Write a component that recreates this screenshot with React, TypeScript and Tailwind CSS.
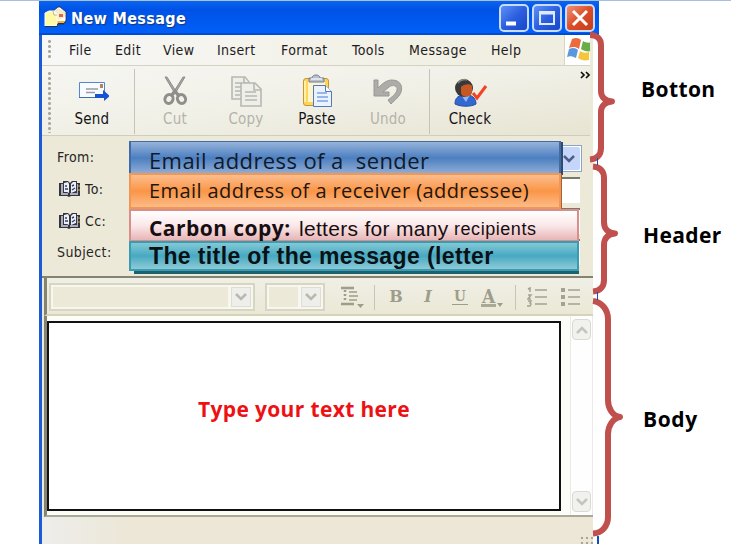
import React from "react";

const menuItems = [
  { label: "File", cell: "w-[46px]" },
  { label: "Edit", cell: "w-[48px]" },
  { label: "View", cell: "w-[54px]" },
  { label: "Insert", cell: "w-[64px]" },
  { label: "Format", cell: "w-[71px]" },
  { label: "Tools", cell: "w-[57px]" },
  { label: "Message", cell: "w-[82px]" },
  { label: "Help", cell: "w-[50px]" },
];

function Grip({ className }: { className: string }) {
  return (
    <div
      className={`w-[3px] shrink-0 bg-[radial-gradient(circle_at_1.5px_1.5px,#aaa89c_1.3px,transparent_1.6px)] bg-[length:3px_5px] ${className}`}
    />
  );
}

function MailIcon() {
  return (
    <svg width="23" height="22" viewBox="0 0 23 22" className="shrink-0">
      <path d="M8 6 14 1h2l6 5v9l-2 3H9z" fill="#fff" stroke="#243050" strokeWidth=".8" />
      <path d="m10 6 4-4 7 4v5l-7 3z" fill="#f2eccb" />
      <path d="M15 8h4v3h-4z" fill="#dc6a46" />
      <path d="M13 15h8l-2 3h-6z" fill="#f4b22c" />
      <path d="M1 7 5 5h5l3 3v12H1z" fill="#fff9a8" stroke="#fffef0" />
      <path d="m9 5 1 4h3" fill="#fff" stroke="#8c8c68" strokeWidth=".6" />
      <path d="M1 20.500h12l1-3h6l2-3" stroke="#26314e" fill="none" />
    </svg>
  );
}

function SendIcon() {
  return (
    <svg width="34" height="34" viewBox="0 0 34 34">
      <path d="M4.500 9.500h25v15h-25z" fill="#f8fbff" stroke="#5585cd" />
      <path d="M4 24.500h22" stroke="#416dac" />
      <path d="M11 16h12M11 19.500h9" stroke="#9b9ba4" strokeWidth="1.500" />
      <path d="M25 11h3v4h-3z" fill="#b6825c" />
      <path d="M20 21h8v-4l7 6-6 5v-3h-9z" fill="#1755ce" />
    </svg>
  );
}

function CutIcon() {
  return (
    <svg width="34" height="34" viewBox="0 0 34 34" fill="none" stroke="#8e8e8a">
      <path d="m7 4 9 15 3 1L9 4zM27 4l-9 15-3 1L25 4z" fill="#a6a6a2" strokeWidth="1" />
      <path d="m18 17-5 6m3-6 5 6" strokeWidth="3.500" />
      <ellipse cx="11" cy="26" rx="4" ry="4.500" strokeWidth="3" transform="rotate(25 11 26)" />
      <ellipse cx="23.500" cy="26" rx="4" ry="4.500" strokeWidth="3" transform="rotate(-25 23.500 26)" />
    </svg>
  );
}

function CopyIcon() {
  return (
    <svg width="34" height="34" viewBox="0 0 34 34" fill="#efefea" stroke="#b8b8b2" strokeWidth="1.600">
      <path d="M3 4h13l4 5v17H3z" />
      <path d="M15 4v6h5M6 10h6M6 14h6M6 18h6M6 22h5" />
      <path d="M12 10h14l6 6v17H12z" />
      <path d="M25 10v7h7M16 19h11M16 23h12M16 27h12" fill="none" />
    </svg>
  );
}

function PasteIcon() {
  return (
    <svg width="34" height="34" viewBox="0 0 34 34">
      <rect x="3.500" y="5.500" width="25" height="27" rx="2.500" fill="#ffd45c" stroke="#c7962f" />
      <path d="M8 9h17v20H8z" fill="#fff5cc" />
      <path d="M5 8v21" stroke="#fff2a3" strokeWidth="2" />
      <path d="M9 9V5h3c0-4 8-4 8 0h4v4z" fill="#b9bfcd" stroke="#747d91" />
      <path d="M11 6h11" stroke="#eef1f6" strokeWidth="1.500" />
      <path d="M13.500 12.500h12l6 6v15h-18z" fill="#eaf3ff" stroke="#5479bb" />
      <path d="M25.500 12.500v6h6" fill="#fff" stroke="#5479bb" />
      <path d="M17 20h10M17 24h11M17 28h11" stroke="#79a4e9" strokeWidth="1.500" />
    </svg>
  );
}

function UndoIcon() {
  return (
    <svg width="34" height="34" viewBox="0 0 34 34">
      <path
        d="M3 7h4v8c5-5 9-8 14-8 8 0 11 6 9 12-1 4-6 8-10 12l-3-4c4-3 8-6 9-10 1-4-4-6-8-3l-6 5h6v4H3z"
        fill="#acaca8"
        stroke="#999994"
      />
    </svg>
  );
}

function CheckIcon() {
  return (
    <svg width="36" height="34" viewBox="0 0 36 34">
      <path d="M3 31c0-6 3-8 7-9h7c4 1 7 4 7 9-5 3-15 3-21 0z" fill="#3468d1" stroke="#23509e" />
      <path d="m9 22 5 7 4-7z" fill="#8db9ff" />
      <circle cx="12" cy="15" r="9" fill="#393939" />
      <path d="M6 10c2-3 6-4 9-3" stroke="#888" strokeWidth="1.500" fill="none" />
      <path d="M9 14c2-3 10-4 11-1v7c-2 5-10 5-11 0z" fill="#c65826" />
      <path d="m21 20 4 5L34 13" fill="none" stroke="#f24326" strokeWidth="3" />
    </svg>
  );
}

function ToolButton({
  label,
  disabled,
  className,
  children,
}: {
  label: string;
  disabled?: boolean;
  className: string;
  children: React.ReactNode;
}) {
  return (
    <div className={`flex shrink-0 flex-col items-center pt-[7px] ${className}`}>
      {children}
      <span
        className={`mt-[2px] whitespace-nowrap text-[15px] leading-[20px] tracking-[0.2px] ${disabled ? "text-[#b4b3a9]" : "text-[#151515]"}`}
      >
        {label}
      </span>
    </div>
  );
}

function WindowButton({ kind }: { kind: "min" | "max" | "close" }) {
  return (
    <div
      className={`flex h-[28px] w-[30px] items-center justify-center rounded-[5px] border-2 border-[#c7dcff] ${
        kind === "close"
          ? "bg-linear-to-br from-[#ee9170] via-[#da4c27] to-[#c5401b]"
          : "bg-linear-to-br from-[#5f90f5] via-[#2c5fdf] to-[#1946ca]"
      }`}
    >
      <svg width="20" height="20" viewBox="0 0 20 20" fill="none" stroke="#fff">
        {kind === "min" && <path d="M2 15.500h10" strokeWidth="4" />}
        {kind === "max" && <path d="M3 4h14v12H3zM3 5.500h14" strokeWidth="2" stroke="#dceaff" />}
        {kind === "close" && <path d="m3 3 14 14M17 3 3 17" strokeWidth="3" />}
      </svg>
    </div>
  );
}

function BookIcon() {
  return (
    <svg width="23" height="18" viewBox="0 0 23 18">
      <path d="M1 3h4V1h5l2 2 2-2h5v2h3v13h-9l-2 1-2-1H1z" fill="#35353b" />
      <path d="M3 4h2v9h5v2H3zM12 15v-2h7V4h1v11z" fill="#a9adbe" />
      <path d="m6 3 4-1 1 2v9l-2-1H6zM13 4l2-2h3v9l-5 2z" fill="#e9effc" />
      <path d="M7 6h2M7 9h3m4-3 2-1m-2 5 3-2" stroke="#39415b" strokeWidth="1.500" />
      <path d="M21 5v2m0 2v2" stroke="#d69c42" />
    </svg>
  );
}

function Chevron({ up, className }: { up?: boolean; className: string }) {
  return (
    <svg width="12" height="10" viewBox="0 0 12 10" fill="none" stroke="currentColor" strokeWidth="2.500" className={className}>
      <path d={up ? "m1 8 5-5 5 5" : "m1 2 5 5 5-5"} />
    </svg>
  );
}

function FormatSelect({ className }: { className: string }) {
  return (
    <div className={`flex h-[28px] shrink-0 border-2 border-[#d7d6c2] bg-[#f8f7ef] p-[2px] ${className}`}>
      <div className="mr-[3px] flex-1 bg-[#ece9d8]" />
      <div className="flex w-[20px] items-center justify-center border border-[#dddcd5] bg-[#eeeeea]">
        <Chevron className="text-[#bab9b0]" />
      </div>
    </div>
  );
}

function ParagraphIcon() {
  return (
    <svg width="24" height="24" viewBox="0 0 24 24" stroke="#9e9d8b" fill="none">
      <path d="M0 2h13M0 18h13" strokeWidth="2.500" />
      <path d="M8 6h8M8 10h9M8 14h8" strokeWidth="1.500" />
      <path d="M4 4v12" strokeWidth="2.500" strokeDasharray="2 2" />
      <path d="M16 18h7l-3.500 4z" fill="#9e9d8b" stroke="none" />
    </svg>
  );
}

function ListIcon({ numbered }: { numbered?: boolean }) {
  return (
    <svg width="20" height="20" viewBox="0 0 20 20" fill="none" stroke="#a3a293">
      <path d="M8 3h12M8 10h12M8 17h12" strokeWidth="1.600" />
      {numbered ? (
        <path d="m1 2 2-1v4M1 8h3l-3 4h3M1 14h3l-1 2 1 1-1 2H0" strokeWidth="1.500" />
      ) : (
        <path d="M1 3h4M1 10h4M1 17h4" strokeWidth="4" />
      )}
    </svg>
  );
}

function WindowsFlag() {
  return (
    <svg width="23" height="24" viewBox="0 0 23 24">
      <path d="M5 2c4-2 7-1 9 1l-2 9c-4-3-7-2-10-1z" fill="#ed6a3d" />
      <path d="M16 4c3 2 6 2 9 1v9c-5 1-8 0-11-2z" fill="#69ad48" />
      <path d="M2 12c4-2 7-1 9 1l-2 8c-4-2-6-2-9-1z" fill="#5b97df" />
      <path d="M13 14c3 2 6 2 9 1v8c-5 1-8 0-11-2z" fill="#f5c63b" />
    </svg>
  );
}

function Braces() {
  return (
    <svg
      width="50"
      height="544"
      viewBox="585 0 50 544"
      className="absolute left-[585px] top-[-1px]"
      fill="none"
      stroke="#c0504d"
      strokeWidth="6"
      strokeLinejoin="round"
    >
      <path d="M590 35C597 35 601 39 601 45V91C601 97 605 101 612 101.500C605 102 601 106 601 112V148C601 155 597 159 590 159.500" />
      <path d="M593 166.500C600 167 604 171 604 178V222C604 229 608 233 615 233.500C608 234 604 238 604 245V280C604 287 600 291 593 291.500" />
      <path d="M593 301C602 302 608 310 608 319V400C608 409 613 416 620 417C613 418 608 426 608 434V517C608 526 602 533 593 533.500" />
    </svg>
  );
}

export default function App() {
  return (
    <div className="relative flex h-[544px] w-[731px] overflow-hidden border-t border-[#a9bfe0] bg-white pl-[39px]">
      <main className="flex h-[543px] w-[560px] shrink-0 flex-col font-['DejaVu_Sans_Condensed','DejaVu_Sans',sans-serif] [font-stretch:condensed]">
        <header className="flex h-[34px] shrink-0 items-center bg-linear-to-b from-[#0b65f0] via-[#0052e6] via-25% to-[#0061fa] pl-[5px] shadow-[inset_0_-2px_0_#004bd1]">
          <div className="-mt-[2px]"><MailIcon /></div>
          <h1 className="ml-[4px] mt-[2px] whitespace-nowrap text-[16px] font-bold tracking-[0.36px] text-white [text-shadow:1px_1px_1px_#17377f]">
            New Message
          </h1>
          <div className="ml-auto mr-[4px] flex gap-[3px]">
            <WindowButton kind="min" />
            <WindowButton kind="max" />
            <WindowButton kind="close" />
          </div>
        </header>

        <div className="flex h-[509px] w-[554px] flex-col border-l-[3px] border-[#1c5bd7] bg-[#ece9d8]">
          <nav className="flex h-[31px] w-[548px] shrink-0 border-b border-[#d6d2c3] bg-linear-to-r from-[#f7f7f5] to-[#efedde] pl-[6px]">
            <Grip className="mt-[5px] h-[20px]" />
            <div className="ml-[18px] flex pt-[6px] text-[14px] leading-[18px] tracking-[0.4px] text-[#1c1c1c]">
              {menuItems.map((item) => (
                <span key={item.label} className={`shrink-0 whitespace-nowrap ${item.cell}`}>
                  {item.label}
                </span>
              ))}
            </div>
            <div className="-ml-[20px] flex flex-1 justify-end">
              <div className="h-[30px] w-[26px] border-l border-[#d8d5c4] bg-white pl-[2px] pt-[2px]">
                <WindowsFlag />
              </div>
            </div>
          </nav>

          <section className="flex h-[70px] w-[548px] shrink-0 border-b border-[#d0cdbc] bg-linear-to-br from-[#f6f6f2] via-[#f1f0e7] to-[#e7e4d2] pl-[6px]">
            <Grip className="mt-[6px] h-[61px]" />
            <ToolButton label="Send" className="ml-[17px] w-[48px]"><SendIcon /></ToolButton>
            <div className="ml-[18px] mt-[3px] h-[65px] w-px bg-[#c7c4b5]" />
            <ToolButton label="Cut" disabled className="ml-[17px] w-[46px]"><CutIcon /></ToolButton>
            <ToolButton label="Copy" disabled className="ml-[24px] w-[48px]"><CopyIcon /></ToolButton>
            <ToolButton label="Paste" className="ml-[23px] w-[48px]"><PasteIcon /></ToolButton>
            <ToolButton label="Undo" disabled className="ml-[23px] w-[48px]"><UndoIcon /></ToolButton>
            <div className="ml-[17px] mt-[3px] h-[65px] w-px bg-[#c7c4b5]" />
            <ToolButton label="Check" className="ml-[15px] w-[50px]"><CheckIcon /></ToolButton>
            <svg width="10" height="9" viewBox="0 0 10 9" className="ml-auto mt-[5px] shrink-0" fill="none" stroke="#111" strokeWidth="1.700">
              <path d="m1 1 3 3-3 3m5-6 3 3-3 3" />
            </svg>
          </section>

          <section className="flex h-[142px] shrink-0 border-b-2 border-[#858473] pl-[15px] text-[14px] tracking-[0.4px] text-[#25251f]">
            <div className="flex w-[74px] shrink-0 flex-col pt-[5px]">
              <span className="h-[32px] leading-[32px]">From:</span>
              <span className="flex h-[32px] items-center gap-[4px] pl-px"><BookIcon />To:</span>
              <span className="flex h-[32px] items-center gap-[4px] pl-px"><BookIcon />Cc:</span>
              <span className="h-[31px] leading-[31px]">Subject:</span>
            </div>
            <div className="flex w-[451px] flex-col gap-[5px] pt-[9px]">
              <div className="flex h-[27px] justify-end border border-[#8aa5c5] bg-white p-px">
                <div className="flex w-[23px] items-center justify-center rounded-[2px] bg-[#c6d5fa]">
                  <Chevron className="text-[#4c5f88]" />
                </div>
              </div>
              <div className="h-[26px] w-[449px] border-t-2 border-[#79786b] bg-white" />
              <div className="h-[26px] w-[449px] border-t-2 border-[#79786b] bg-white" />
              <div className="h-[26px] w-[449px] border-t-2 border-[#79786b] bg-white" />
            </div>
          </section>

          <section className="ml-[2px] flex h-[38px] shrink-0 items-center border-b-2 border-[#d5d3bd] border-l-[3px] border-l-[#858473] bg-linear-to-b from-[#f0efe6] to-[#ebe8d5] pl-[2px] pt-[2px] text-[#9e9d8b]">
            <FormatSelect className="w-[206px]" />
            <FormatSelect className="ml-[10px] w-[60px]" />
            <div className="ml-[16px] pt-[2px]"><ParagraphIcon /></div>
            <div className="ml-[9px] h-[25px] w-px bg-[#c7c5b5]" />
            <span className="ml-[13px] w-[16px] text-center font-['DejaVu_Serif',serif] text-[16px] font-bold leading-none [font-stretch:normal]">B</span>
            <span className="ml-[17px] w-[14px] text-center font-['DejaVu_Serif',serif] text-[16px] font-bold italic leading-none [font-stretch:normal]">I</span>
            <span className="ml-[17px] flex w-[16px] justify-center border-b border-[#9e9d8b] font-['DejaVu_Serif',serif] text-[15px] font-bold leading-[15px]">U</span>
            <span className="ml-[13px] border-b-[3px] border-[#aaa997] px-px font-['DejaVu_Serif',serif] text-[19px] font-bold leading-[16px]">A</span>
            <div className="ml-px mt-[16px] border-x-[3px] border-t-4 border-x-transparent border-t-[#9e9d8b]" />
            <div className="ml-[12px] h-[25px] w-px bg-[#c7c5b5]" />
            <div className="ml-[11px]"><ListIcon numbered /></div>
            <div className="ml-[13px]"><ListIcon /></div>
          </section>

          <section className="ml-[2px] flex h-[201px] shrink-0 border-b-2 border-l-[3px] border-b-[#a9a997] border-l-[#858473] bg-[#fdfdf8]">
            <div className="mt-[5px] h-[190px] w-[514px] border-2 border-[#111] bg-white pt-[71px] text-center font-['Open_Sans',sans-serif] text-[21px] font-bold tracking-[0.35px] text-[#ed1113] [font-stretch:normal]">
              Type your text here
            </div>
            <div className="ml-[9px] flex w-[23px] flex-col justify-between border-x border-[#ece9e6] bg-[#fefefe] px-px py-[3px]">
              <div className="flex h-[21px] items-center justify-center rounded border border-[#dadad4] bg-[#f1f1ee]"><Chevron up className="text-[#c4c4c0]" /></div>
              <div className="flex h-[21px] items-center justify-center rounded border border-[#dadad4] bg-[#f1f1ee]"><Chevron className="text-[#c4c4c0]" /></div>
            </div>
          </section>
          <footer className="flex flex-1 items-end justify-end bg-linear-to-r from-[#ededeb] via-[#ece7d7] via-15% to-[#ece7d7]">
            <div className="h-[8px] w-[13px] bg-[radial-gradient(circle_at_2px_2px,#aaa797_1.2px,transparent_1.6px)] bg-[length:5px_5px]" />
          </footer>
        </div>
      </main>

      <div className="absolute left-[134px] top-[243px] h-[30px] w-[445px] bg-[#1c6170]" />
      <div className="absolute left-[129px] top-[140px] h-[33px] w-[432px] whitespace-pre border-x-2 border-t border-[#416ba6] bg-linear-to-b from-[#96b3da] via-[#4c7fc0] to-[#93afd7] pl-[18px] font-['Open_Sans',sans-serif] text-[22px] leading-[36px] tracking-[0.4px] text-[#101a2b] shadow-[2px_1px_0_#304b70]">
        Email address of a  sender
      </div>
      <div className="absolute left-[129px] top-[172px] h-[36px] w-[432px] whitespace-nowrap border-2 border-[#f19653] bg-linear-to-b from-[#fcbd8b] via-[#fa9545] to-[#fcbb87] pl-[18px] font-['Open_Sans',sans-serif] text-[20px] leading-[31px] tracking-[0.42px] text-[#1e160f] shadow-[1px_1px_0_#a66236]">
        Email address of a receiver (addressee)
      </div>
      <div className="absolute left-[129px] top-[208px] flex h-[33px] w-[450px] whitespace-nowrap border-2 border-[#d88f8c] bg-linear-to-b from-white via-[#fae8e9] to-[#e7b5b7] pl-[18px] leading-[35px] text-[#160e10]">
        <span className="w-[150px] font-['Open_Sans',sans-serif] text-[21px] font-bold tracking-[0.45px]">Carbon copy:</span>
        <span className="w-[155px] font-['Liberation_Sans',Arial,sans-serif] text-[21px] tracking-[0.3px]">letters for many</span>
        <span className="font-['Liberation_Sans',Arial,sans-serif] text-[18px] leading-[37px] tracking-[0.55px]">recipients</span>
      </div>
      <div className="absolute left-[129px] top-[240px] h-[30px] w-[450px] whitespace-nowrap border-2 border-[#3b9bb0] bg-linear-to-b from-[#82c9d6] via-[#46a9c1] to-[#8ccbd8] pl-[18px] font-['Liberation_Sans',Arial,sans-serif] text-[23px] font-bold leading-[26px] tracking-[0.38px] text-[#081216]">
        The title of the message (letter
      </div>

      <Braces />
      <span className="absolute left-[641px] top-[73px] font-['Open_Sans',sans-serif] text-[21px] font-bold leading-[30px] tracking-[0.4px] text-black">Botton</span>
      <span className="absolute left-[643px] top-[219px] font-['Open_Sans',sans-serif] text-[21px] font-bold leading-[30px] tracking-[0.4px] text-black">Header</span>
      <span className="absolute left-[643px] top-[403px] font-['Open_Sans',sans-serif] text-[21px] font-bold leading-[30px] tracking-[0.6px] text-black">Body</span>
      <div className="absolute left-[597px] top-[157px] h-[7px] w-px bg-[#174dc2]" />
      <div className="absolute left-[597px] top-[291px] h-[8px] w-px bg-[#174dc2]" />
      <div className="absolute left-[597px] top-[535px] h-[9px] w-[2px] bg-[#174dc2]" />
    </div>
  );
}
